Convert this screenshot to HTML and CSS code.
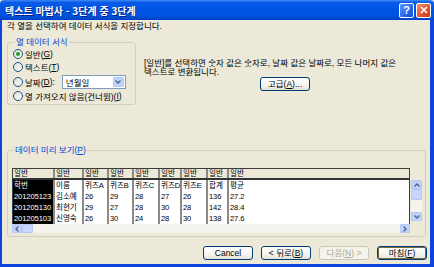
FILE: index.html
```html
<!DOCTYPE html>
<html lang="ko">
  <head>
    <meta charset="UTF-8" />
    <meta name="viewport" content="width=device-width, initial-scale=1.0" />
    <title>텍스트 마법사 - 3단계 중 3단계</title>
    <link rel="stylesheet" href="styles.css">
  </head>
  <body>
    <div class="window">
      <div class="titlebar">
        <span class="title">텍스트 마법사 - 3단계 중 3단계</span>
        <div class="caption-buttons">
          <span class="cap help">?</span>
          <span class="cap close">
            <svg width="8" height="8" viewBox="0 0 8 8"><path d="M1 1 L7 7 M7 1 L1 7" stroke="#fff" stroke-width="1.6"/></svg>
          </span>
        </div>
      </div>

      <div class="client">
        <p class="intro">각 열을 선택하여 데이터 서식을 지정합니다.</p>

        <div class="format-row">
          <fieldset class="group format-group">
            <legend>열 데이터 서식</legend>
            <div class="radio-row r1"><span class="radio checked"></span>일반(<u>G</u>)</div>
            <div class="radio-row r2"><span class="radio"></span>텍스트(<u>T</u>)</div>
            <div class="radio-row r3">
              <span class="radio"></span>날짜(<u>D</u>):
              <div class="select">
                <span>년월일</span>
                <span class="drop">
                  <svg width="6" height="4" viewBox="0 0 6 4"><path d="M0.5 0.5 L3 3 L5.5 0.5" stroke="#4d6185" stroke-width="1.3" fill="none"/></svg>
                </span>
              </div>
            </div>
            <div class="radio-row r4"><span class="radio"></span>열 가져오지 않음(건너뜀)(<u>I</u>)</div>
          </fieldset>

          <div class="format-info">
            <p>[일반]를 선택하면 숫자 값은 숫자로, 날짜 값은 날짜로, 모든 나머지 값은<br>텍스트로 변환됩니다.</p>
            <button class="btn advanced">고급(<u>A</u>)...</button>
          </div>
        </div>

        <fieldset class="group preview-group">
          <legend>데이터 미리 보기(<u>P</u>)</legend>
          <div class="preview">
            <div class="preview-top">
              <div class="sheet">
                <div class="sheet-row head">
                  <span>일반</span><span>일반</span><span>일반</span><span>일반</span><span>일반</span><span>일반</span><span>일반</span><span>일반</span><span>일반</span>
                </div>
                <div class="sheet-row">
                  <span>학번</span><span>이름</span><span>퀴즈A</span><span>퀴즈B</span><span>퀴즈C</span><span>퀴즈D</span><span>퀴즈E</span><span>합계</span><span>평균</span>
                </div>
                <div class="sheet-row">
                  <span>201205123</span><span>김소예</span><span>26</span><span>29</span><span>28</span><span>27</span><span>26</span><span>136</span><span>27.2</span>
                </div>
                <div class="sheet-row">
                  <span>201205130</span><span>최현기</span><span>29</span><span>27</span><span>28</span><span>30</span><span>28</span><span>142</span><span>28.4</span>
                </div>
                <div class="sheet-row">
                  <span>201205103</span><span>신영숙</span><span>26</span><span>30</span><span>24</span><span>28</span><span>30</span><span>138</span><span>27.6</span>
                </div>
              </div>
              <div class="vscroll">
                <span class="sb-btn">
                  <svg width="6" height="4" viewBox="0 0 6 4"><path d="M0.5 3.5 L3 1 L5.5 3.5" stroke="#4d6185" stroke-width="1.3" fill="none"/></svg>
                </span>
                <span class="sb-thumb"></span>
                <span class="sb-track"></span>
                <span class="sb-btn">
                  <svg width="6" height="4" viewBox="0 0 6 4"><path d="M0.5 0.5 L3 3 L5.5 0.5" stroke="#4d6185" stroke-width="1.3" fill="none"/></svg>
                </span>
              </div>
            </div>
            <div class="hscroll">
              <span class="sb-btn">
                <svg width="4" height="6" viewBox="0 0 4 6"><path d="M3.5 0.5 L1 3 L3.5 5.5" stroke="#4d6185" stroke-width="1.3" fill="none"/></svg>
              </span>
              <span class="sb-thumb"></span>
              <span class="sb-track"></span>
              <span class="sb-btn">
                <svg width="4" height="6" viewBox="0 0 4 6"><path d="M0.5 0.5 L3 3 L0.5 5.5" stroke="#4d6185" stroke-width="1.3" fill="none"/></svg>
              </span>
            </div>
          </div>
        </fieldset>

        <div class="buttons">
          <button class="btn">Cancel</button>
          <button class="btn">&lt; 뒤로(<u>B</u>)</button>
          <button class="btn disabled">다음(<u>N</u>) &gt;</button>
          <button class="btn default">마침(<u>F</u>)</button>
        </div>
      </div>
    </div>
  </body>
</html>
```

FILE: styles.css
```css
body {
  margin: 0;
  padding: 0;
  font-family: "Liberation Sans", "Noto Sans CJK KR", sans-serif;
  font-size: 8.5px;
  color: #000;
  background-color: #ece9d8;
}
.window {
  width: 434px;
  height: 267px;
  box-sizing: border-box;
  display: flex;
  flex-direction: column;
}
.titlebar {
  height: 20px;
  flex: none;
  display: flex;
  align-items: center;
  justify-content: space-between;
  padding: 0 3px 0 5px;
  background: linear-gradient(to bottom, #3d8cf5 0%, #0a5ae8 12%, #0054e3 45%, #0052dd 80%, #0041c2 100%);
  border-radius: 4px 4px 0 0;
}
.title {
  color: #fff;
  font-family: "Noto Sans CJK KR", sans-serif;
  font-size: 10px;
  font-weight: bold;
  text-shadow: 1px 1px 0 #0a1e8a;
}
.caption-buttons {
  display: flex;
  gap: 2px;
}
.cap {
  width: 13px;
  height: 13px;
  border: 1px solid #fff;
  border-radius: 2px;
  display: flex;
  align-items: center;
  justify-content: center;
  color: #fff;
  font-weight: bold;
  font-size: 11px;
  font-family: "Liberation Sans", sans-serif;
}
.help {
  background: linear-gradient(135deg, #5a9bff, #2a62e8 60%, #1b4fd0);
}
.close {
  background: linear-gradient(135deg, #f0906a, #e0532d 60%, #c4401f);
}
.client {
  flex: 1;
  border-left: 2px solid #0b45dc;
  border-right: 4px solid #0b45dc;
  border-bottom: 3px solid #0b45dc;
  padding: 0 0 0 5px;
  background-color: #ece9d8;
}
.intro {
  margin: 1px 0 0;
  line-height: 10px;
}
.format-row {
  display: flex;
  margin-top: 6px;
}
.group {
  margin: 0;
  padding: 0;
  border: 1px solid #d0d0bf;
  border-radius: 3px;
}
.group legend {
  color: #0046d5;
  line-height: 10px;
  padding: 0 1px;
  margin-left: 2px;
}
.format-group {
  width: 129px;
  box-sizing: border-box;
  padding: 0 0 2px 5px;
}
.radio-row {
  display: flex;
  align-items: center;
  height: 13px;
  white-space: nowrap;
}
.radio-row.r2 {
  height: 14px;
}
.radio-row.r3 {
  height: 15px;
}
.radio {
  width: 8px;
  height: 8px;
  border: 1px solid #1c5180;
  border-radius: 50%;
  background: linear-gradient(135deg, #dcdcd4, #fff);
  margin-right: 2px;
  display: flex;
  align-items: center;
  justify-content: center;
}
.radio.checked::after {
  content: "";
  width: 4px;
  height: 4px;
  border-radius: 50%;
  background: #21a121;
}
.select {
  width: 64px;
  height: 14px;
  box-sizing: border-box;
  margin-left: 7px;
  border: 1px solid #7f9db9;
  background: #fff;
  display: flex;
  align-items: center;
  justify-content: space-between;
  padding: 0 1px 0 3px;
}
.drop {
  width: 11px;
  height: 10px;
  background: #c1d3fb;
  border: 1px solid #b3c8f5;
  box-sizing: border-box;
  border-radius: 1px;
  display: flex;
  align-items: center;
  justify-content: center;
}
.format-info {
  margin: 22px 0 0 8px;
}
.format-info p {
  margin: 0;
  line-height: 9px;
  white-space: nowrap;
}
.btn {
  width: 50px;
  height: 14px;
  padding: 0;
  font-family: "Liberation Sans", "Noto Sans CJK KR", sans-serif;
  font-size: 8.5px;
  line-height: 12px;
  color: #000;
  border: 1px solid #003c74;
  border-radius: 3px;
  background: linear-gradient(to bottom, #fff 0%, #f5f4ef 60%, #e3e0d6 100%);
}
.btn.advanced {
  margin-left: 116px;
}
.btn.disabled {
  color: #aca899;
  border-color: #c9c7ba;
  background: #f5f4ea;
}
.btn.default {
  box-shadow: inset 0 0 0 1px #7c6a46;
}
.preview-group {
  margin: 40px 4px 0 0;
  padding: 0 0 3px 4px;
}
.preview {
  margin-top: 13px;
}
.preview-top {
  display: flex;
  align-items: flex-start;
}
.sheet {
  width: 398px;
  box-sizing: border-box;
  border: 1px solid #3c3c3c;
  border-bottom: none;
  background: #fff;
  font-family: "Liberation Sans", "Noto Sans CJK KR", sans-serif;
  font-size: 7.6px;
  letter-spacing: -0.1px;
}
.sheet-row {
  display: grid;
  grid-template-columns: 40px 29px 25px 25px 26px 22px 26px 21px 1fr;
  height: 11px;
  line-height: 11px;
}
.sheet-row.head {
  height: 9px;
  line-height: 9px;
  background: #ece9d8;
  border-bottom: 2px solid #333;
}
.sheet-row span {
  padding-left: 1px;
  border-left: 2px solid #8a8a8a;
  white-space: nowrap;
  overflow: hidden;
}
.sheet-row span:first-child {
  border-left: none;
}
.sheet-row:not(.head) span:first-child {
  background: #000;
  color: #fff;
}
.vscroll {
  margin: 12px 0 0 1px;
  width: 11px;
  height: 41px;
  display: flex;
  flex-direction: column;
  background: #f4f3ee;
}
.hscroll {
  width: 398px;
  height: 9px;
  display: flex;
  background: #f4f3ee;
}
.sb-btn {
  flex: none;
  width: 11px;
  height: 9px;
  box-sizing: border-box;
  background: #c1d3fb;
  border: 1px solid #b3c8f5;
  border-radius: 1px;
  display: flex;
  align-items: center;
  justify-content: center;
}
.hscroll .sb-btn {
  width: 10px;
}
.sb-thumb {
  flex: none;
  width: 11px;
  height: 11px;
  box-sizing: border-box;
  background: #c8d6fb;
  border: 1px solid #b3c8f5;
  border-radius: 1px;
}
.hscroll .sb-thumb {
  height: 9px;
}
.sb-track {
  flex: 1;
}
.buttons {
  display: flex;
  justify-content: flex-end;
  gap: 8px;
  margin: 9px 3px 0 0;
}
```
